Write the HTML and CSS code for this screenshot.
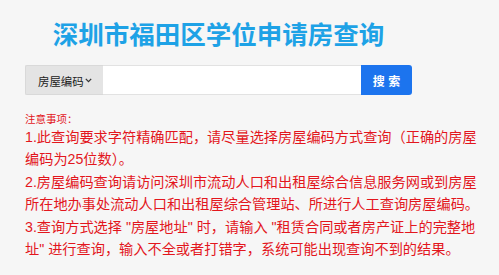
FILE: index.html
```html
<!DOCTYPE html>
<html lang="zh-CN">
<head>
<meta charset="utf-8">
<title>深圳市福田区学位申请房查询</title>
<link rel="stylesheet" href="styles.css">
</head>
<body>
<div class="page">
  <h1 class="title">深圳市福田区学位申请房查询</h1>
  <form class="search">
    <div class="select">
      <span class="select-text">房屋编码</span>
      <svg class="chev" width="7" height="5" viewBox="0 0 7 5"><path d="M0.8 0.9 L3.5 3.6 L6.2 0.9" fill="none" stroke="#333" stroke-width="1.3"/></svg>
    </div>
    <div class="input"></div>
    <div class="btn">搜 索</div>
  </form>
  <div class="notes">
    <div class="notes-head">注意事项：</div>
    <p class="item">1.此查询要求字符精确匹配，请尽量选择房屋编码方式查询（正确的房屋编码为25位数）。</p>
    <p class="item">2.房屋编码查询请访问深圳市流动人口和出租屋综合信息服务网或到房屋所在地办事处流动人口和出租屋综合管理站、所进行人工查询房屋编码。</p>
    <p class="item">3.查询方式选择 "房屋地址" 时，请输入 "租赁合同或者房产证上的完整地址" 进行查询，输入不全或者打错字，系统可能出现查询不到的结果。</p>
  </div>
</div>
</body>
</html>
```
FILE: styles.css
```css
html, body {
  margin: 0;
  padding: 0;
  background: #f6f6f6;
}
body {
  font-family: "Liberation Sans", "Noto Sans CJK SC", sans-serif;
}
.page {
  padding-left: 25px;
}
.title {
  margin: 0;
  padding-top: 18px;
  width: 387px;
  text-align: center;
  font-size: 25.5px;
  line-height: 30px;
  font-weight: bold;
  color: #1ea2e6;
  font-family: "Noto Sans CJK SC", sans-serif;
}
.search {
  margin: 17px 0 0 0;
  display: flex;
  width: 387px;
  height: 30px;
}
.select {
  box-sizing: border-box;
  width: 78px;
  height: 30px;
  background: #e4e4e4;
  border: 1px solid #d9d9d9;
  border-right: none;
  border-radius: 2px 0 0 2px;
  display: flex;
  align-items: center;
  padding-left: 12px;
  padding-top: 2px;
  font-size: 11.4px;
  color: #222;
}
.chev {
  margin-left: 1px;
  margin-top: -1px;
}
.input {
  box-sizing: border-box;
  flex: 1;
  height: 30px;
  background: #fff;
  border-top: 1px solid #e2e2e2;
  border-bottom: 1px solid #e2e2e2;
}
.btn {
  width: 51px;
  height: 30px;
  background: #1c74ee;
  border-radius: 0 3px 3px 0;
  color: #fff;
  font-size: 12px;
  font-weight: bold;
  display: flex;
  align-items: center;
  justify-content: center;
}
.notes {
  margin-top: 17px;
  width: 459px;
  color: #e3161d;
}
.notes-head {
  font-size: 10.5px;
  line-height: 14px;
}
.item {
  margin: 0;
  font-size: 14.2px;
  line-height: 22.4px;
}
```
